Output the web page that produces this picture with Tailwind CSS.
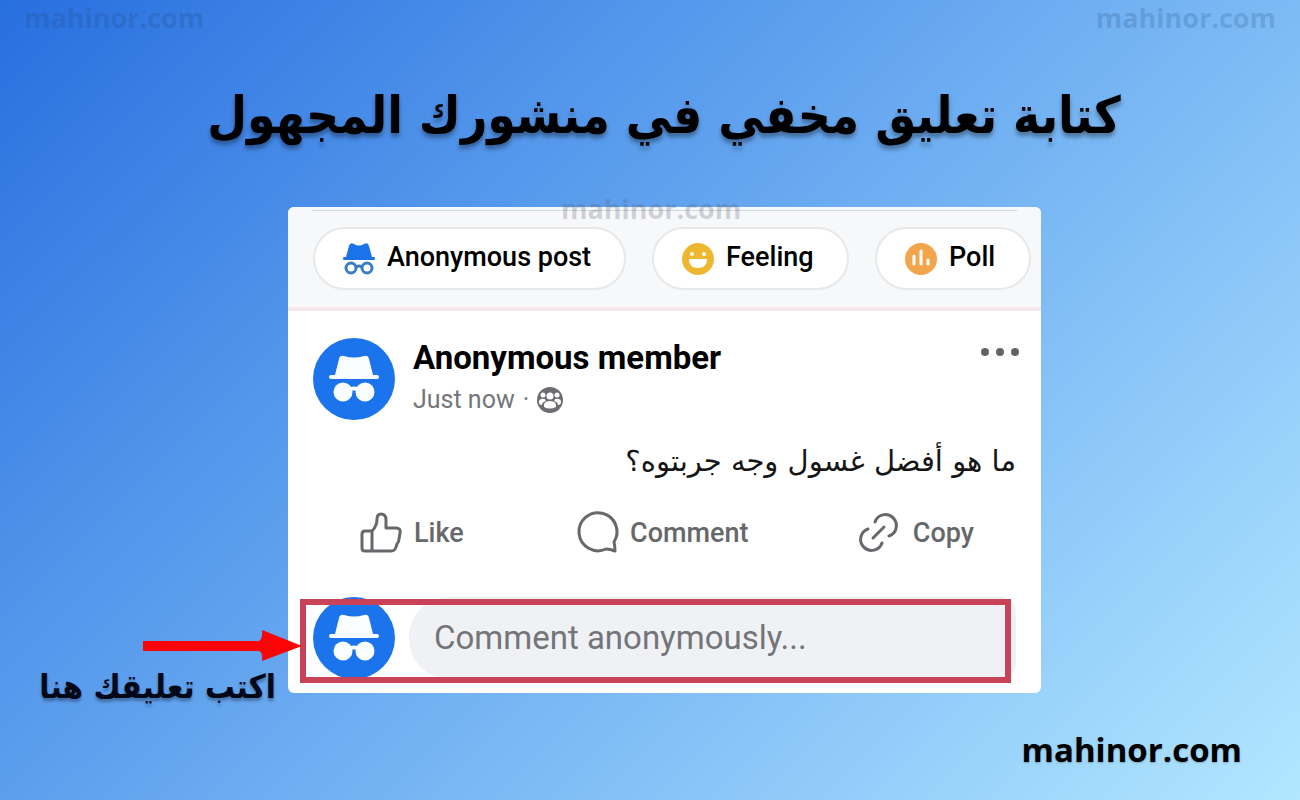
<!DOCTYPE html>
<html lang="ar">
<head>
  <meta charset="UTF-8">
  <meta name="viewport" content="width=device-width, initial-scale=1.0">
  <title>mahinor.com</title>
  <script src="https://cdn.jsdelivr.net/npm/@tailwindcss/browser@4"></script>
</head>
<body class="min-h-screen flex flex-col bg-linear-135 from-[#286fdf] to-[#b2e7ff] font-['Roboto','Noto_Sans','DejaVu_Sans',sans-serif] text-black">

  <!-- Shared shapes -->
  <svg class="hidden" aria-hidden="true">
    <symbol id="incognito" viewBox="0 0 82 82">
      <circle cx="41" cy="41" r="41" fill="#1b74ec"/>
      <path fill="#fafeff" d="M26 21q1-4 5-3 10 3 20 0 4-1 5 3l4 16h4q2 0 2 2t-2 2H18q-2 0-2-2t2-2h4z"/>
      <path fill="none" stroke="#fafeff" stroke-width="4" d="M34 52q7-3 14 0"/>
      <circle cx="30" cy="54" r="9.500" fill="#fafeff"/>
      <circle cx="52" cy="54" r="9.500" fill="#fafeff"/>
    </symbol>
  </svg>

  <header class="flex justify-between px-6 font-['Open_Sans',sans-serif] text-[27px] leading-9 font-bold text-[#1b3f70]/20" dir="ltr">
    <span>mahinor.com</span>
    <span>mahinor.com</span>
  </header>

  <h1 dir="rtl" class="mt-8 h-[139px] pl-7 text-center whitespace-nowrap font-['DejaVu_Sans_Condensed','DejaVu_Sans',sans-serif] text-[51px] leading-[96px] font-bold text-shadow-[0_4px_4px_rgb(0_0_0/0.35)]">كتابة تعليق مخفي في منشورك المجهول</h1>

  <main class="grid grid-cols-[288fr_753fr_259fr]">

    <!-- Arrow and its caption -->
    <aside class="relative z-10 -mr-4 flex flex-col items-end pt-[422px]">
      <svg class="mr-[2px] w-40 h-8" viewBox="0 0 160 32" fill="#fb0408" aria-hidden="true">
        <path d="M1 12h116q4-2 3-11l40 16-40 15q1-9-3-10H1z"/>
      </svg>
      <p dir="rtl" class="mr-7 whitespace-nowrap font-['DejaVu_Sans_Condensed','DejaVu_Sans',sans-serif] text-[33px] leading-[52px] font-bold text-[#020817] text-shadow-[0_3px_3px_rgb(0_0_0/0.3)]">اكتب تعليقك هنا</p>
    </aside>

    <article dir="ltr" class="relative self-start rounded-md bg-white pb-[14px]">
      <span class="absolute -top-4 left-[273px] font-['Open_Sans',sans-serif] text-[27px] leading-9 font-bold text-[#555b66]/25">mahinor.com</span>

      <div class="rounded-t-md border-b-4 border-[#f6e7eb] bg-[#f7f8fa] pt-[3px] pb-[17px]">
        <hr class="mx-6 border-[#c9dce0]">
        <div class="mt-4 flex gap-[26px] pl-[25px] pr-[10px] text-[27px] leading-none font-medium whitespace-nowrap">
          <button type="button" class="flex h-[63px] basis-[313px] items-center gap-3 rounded-full border-2 border-[#e7e8ea] bg-white pl-7">
            <svg class="w-8 h-8 shrink-0" viewBox="0 0 32 32" aria-hidden="true">
              <path fill="#1a73e8" d="M3 14 6 3q1-4 5-2 5 3 10 0 4-2 5 2l3 11h2q1 0 1 1.500T31 17H1q-1 0-1-1.500T1 14z"/>
              <g fill="none" stroke="#3a7cc0" stroke-width="3"><circle cx="8" cy="25" r="5"/><circle cx="24" cy="25" r="5"/><path d="M13 24q3-2 6 0"/></g>
            </svg>
            <span class="pb-[2px]">Anonymous post</span>
          </button>
          <button type="button" class="flex h-[63px] basis-[197px] items-center gap-3 rounded-full border-2 border-[#e7e8ea] bg-white pl-7">
            <svg class="w-8 h-8 shrink-0" viewBox="0 0 32 32" aria-hidden="true">
              <circle cx="16" cy="16" r="16" fill="#edb72f"/>
              <circle cx="10" cy="11" r="2" fill="#fff"/><circle cx="22" cy="11" r="2" fill="#fff"/>
              <path fill="#fff" d="M7 16h18q0 9-9 9t-9-9z"/>
            </svg>
            <span class="pb-[2px]">Feeling</span>
          </button>
          <button type="button" class="flex h-[63px] basis-[156px] items-center gap-3 rounded-full border-2 border-[#e7e8ea] bg-white pl-7">
            <svg class="w-8 h-8 shrink-0" viewBox="0 0 32 32" aria-hidden="true">
              <circle cx="16" cy="16" r="16" fill="#f3a54c"/>
              <path fill="none" stroke="#fff" stroke-width="3" stroke-linecap="round" d="M9 13v8M16 8v13M23 17v4"/>
            </svg>
            <span class="pb-[2px]">Poll</span>
          </button>
        </div>
      </div>

      <div class="flex gap-[18px] pt-[27px] pl-[25px] pr-[21px]">
        <svg class="w-[82px] h-[82px] shrink-0" role="img" aria-label="Anonymous member"><use href="#incognito"/></svg>
        <div class="grow">
          <h2 class="text-[33px] leading-10 font-bold">Anonymous member</h2>
          <p class="mt-1 flex items-center gap-2 text-[25px] leading-9 text-[#737579]">
            Just now <span>·</span>
            <svg class="w-[26px] h-[26px]" viewBox="0 0 26 26" aria-hidden="true">
              <circle cx="13" cy="13" r="13" fill="#6b6d70"/>
              <g fill="#fff"><circle cx="13" cy="9" r="3.500"/><circle cx="6" cy="8" r="2.500"/><circle cx="20" cy="8" r="2.500"/>
              <path d="M7 20q-1-6 6-6t6 6q-6 3-12 0zM2 15q0-4 6-3 0 1 1 2-4 1-4 4-3 0-3-3zM24 15q0-4-6-3 0 1-1 2 4 1 4 4 3 0 3-3z"/></g>
            </svg>
          </p>
        </div>
        <button type="button" aria-label="More" class="h-7">
          <svg class="w-10 h-2" viewBox="0 0 40 8" fill="#626467"><circle cx="5" cy="4" r="4"/><circle cx="20" cy="4" r="4"/><circle cx="35" cy="4" r="4"/></svg>
        </button>
      </div>

      <p dir="rtl" class="mt-4 pr-[25px] text-[29px] leading-[50px] text-[#151515] font-['DejaVu_Sans',sans-serif]">ما هو أفضل غسول وجه جربتوه؟</p>

      <div class="mt-[22px] flex justify-between pl-[72px] pr-[67px] text-[27px] leading-[50px] font-medium text-[#66686b]">
        <button type="button" class="flex items-center gap-3">
          <svg class="w-[42px] h-[42px]" viewBox="0 0 42 42" fill="none" stroke="#66686b" stroke-width="3" stroke-linejoin="round" aria-hidden="true">
            <path d="M12 19q5-5 5-12 0-5 4-5 5 0 5 6v8h10q5 0 4 5l-1 6q0 3-2 5l-1 3q-1 4-5 4H5q-3 0-3-3V22q0-3 3-3zv20"/>
          </svg>
          Like
        </button>
        <button type="button" class="flex items-center gap-3">
          <svg class="w-[42px] h-[42px] overflow-visible" viewBox="0 0 42 42" fill="none" stroke="#66686b" stroke-width="3" stroke-linejoin="round" aria-hidden="true">
            <path d="M38 30A19 19 0 1 0 30 37q4 0 9 2 0-5-1-9z"/>
          </svg>
          Comment
        </button>
        <button type="button" class="flex items-center gap-3">
          <svg class="w-10 h-10 overflow-visible" viewBox="0 0 40 40" fill="none" stroke="#66686b" stroke-width="3" stroke-linecap="round" aria-hidden="true">
            <path d="M14 9A11 11 0 1 1 28 23M7 16A11 11 0 1 0 21 30M12 25l11-11"/>
          </svg>
          Copy
        </button>
      </div>

      <form class="relative mt-[39px] flex gap-[14px] pl-[25px] pr-[25px]">
        <svg class="w-[82px] h-[82px] shrink-0" aria-hidden="true"><use href="#incognito"/></svg>
        <input type="text" aria-label="Comment anonymously" placeholder="Comment anonymously..." class="min-w-0 grow rounded-l-[40px] rounded-r-2xl bg-[#f0f1f5] px-[25px] text-[33px] placeholder:text-[#737579]">
        <div class="pointer-events-none absolute top-[2px] -bottom-1 left-3 right-[30px] border-6 border-[#c94358]"></div>
      </form>
    </article>
  </main>

  <footer dir="ltr" class="mt-auto pb-6 pr-[58px] text-right font-['Open_Sans',sans-serif] text-[33px] leading-[52px] font-bold text-shadow-[0_1px_2px_rgb(0_0_0/0.25)]">mahinor.com</footer>
</body>
</html>
